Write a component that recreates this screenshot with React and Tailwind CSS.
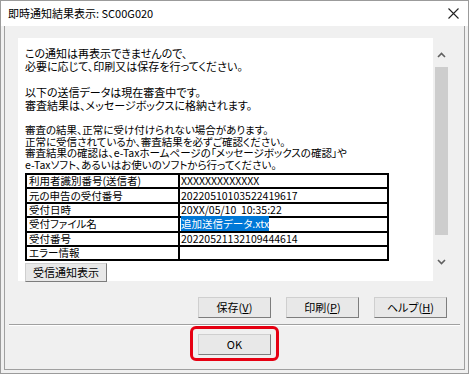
import React from 'react';

function WinButton({ children, className = '' }) {
  return (
    <button
      className={`h-[21px] w-[73px] flex items-center justify-center border border-[#cfcfcf] border-r-[#7d7d7d] border-b-[#7d7d7d] bg-[#e8e8e8] text-[11px] text-black leading-none ${className}`}
    >
      {children}
    </button>
  );
}

function Chevron({ up }) {
  return (
    <svg width="9" height="6" viewBox="0 0 9 6" className="block">
      <path
        d={up ? 'M1 5 L4.5 1.5 L8 5' : 'M1 1 L4.5 4.5 L8 1'}
        fill="none"
        stroke="#606060"
        strokeWidth="1.6"
      />
    </svg>
  );
}

const rows = [
  ['利用者識別番号(送信者)', 'XXXXXXXXXXXXX'],
  ['元の申告の受付番号', '20220510103522419617'],
  ['受付日時', '20XX/05/10  10:35:22'],
  ['受付ファイル名', 'selected'],
  ['受付番号', '20220521132109444614'],
  ['エラー情報', ''],
];

export default function App() {
  return (
    <div className="w-[469px] h-[374px] border border-[#9b9b9b] bg-white flex flex-col overflow-hidden font-['Noto_Sans_CJK_JP',sans-serif] text-black [font-feature-settings:'palt']">
      {/* title bar */}
      <div className="h-[25px] flex items-center justify-between pl-[7px] pr-[9px] shrink-0">
        <span className="text-[11px] leading-none">即時通知結果表示: SC00G020</span>
        <svg width="11" height="11" viewBox="0 0 11 11">
          <path d="M0.5 0.5 L10.5 10.5 M10.5 0.5 L0.5 10.5" stroke="#222" strokeWidth="1.1" />
        </svg>
      </div>

      <div className="flex-1 bg-[#f0f0f0] px-[3px] pb-[3px] flex flex-col">
        <div className="flex-1 border-x border-b border-[#a0a0a0] flex flex-col">
          {/* scrollable panel */}
          <div className="mt-[12px] mx-[13px] h-[243px] flex">
            <div className="w-[415px] bg-white px-[7px] pt-[9px]">
              <p className="text-[11px] leading-[13px]">
                この通知は再表示できませんので、
                <br />
                必要に応じて、印刷又は保存を行ってください。
              </p>
              <p className="text-[11px] leading-[13px] mt-[13px]">
                以下の送信データは現在審査中です。
                <br />
                審査結果は、メッセージボックスに格納されます。
              </p>
              <p className="text-[10.5px] leading-[11.5px] mt-[12px]">
                審査の結果、正常に受け付けられない場合があります。
                <br />
                正常に受信されているか、審査結果を必ずご確認ください。
                <br />
                審査結果の確認は、e-Taxホームページの「メッセージボックスの確認」や
                <br />
                e-Taxソフト、あるいはお使いのソフトから行ってください。
              </p>

              <table className="mt-[3px] border border-black border-separate border-spacing-0 w-[364px] text-[10.5px]">
                <tbody>
                  {rows.map(([label, value]) => (
                    <tr key={label}>
                      <td className="w-[153px] border border-black h-[14.4px] leading-[12px] px-[2px] whitespace-nowrap">
                        {label}
                      </td>
                      <td className="border border-black h-[14.4px] leading-[12px] px-[1px] whitespace-pre">
                        {value === 'selected' ? (
                          <span className="bg-[#0078d7] text-white">追加送信データ.xtx</span>
                        ) : (
                          value
                        )}
                      </td>
                    </tr>
                  ))}
                </tbody>
              </table>

              <button className="mt-[2px] h-[19px] w-[82px] flex items-center justify-center border border-[#cfcfcf] border-r-[#7d7d7d] border-b-[#7d7d7d] bg-[#e8e8e8] text-[11px] leading-none">
                受信通知表示
              </button>
            </div>

            {/* scrollbar */}
            <div className="w-[17px] flex flex-col items-center">
              <div className="h-[26px] flex items-center justify-center pt-[8px]">
                <Chevron up />
              </div>
              <div className="w-[13px] h-[168px] mt-[3px] bg-[#cdcdcd]" />
              <div className="flex-1 flex items-end justify-center pb-[16px]">
                <Chevron />
              </div>
            </div>
          </div>

          {/* action buttons */}
          <div className="mt-[16px] flex justify-end gap-[15px] pr-[17px]">
            <WinButton>
              保存(<span className="underline">V</span>)
            </WinButton>
            <WinButton>
              印刷(<span className="underline">P</span>)
            </WinButton>
            <WinButton>
              ヘルプ(<span className="underline">H</span>)
            </WinButton>
          </div>

          <div className="mt-[6px] mx-[4px] border-t border-t-[#a0a0a0] border-b border-b-white" />

          <div className="flex justify-center">
            <div className="border-[3px] border-[#e60012] rounded-[6px] px-[5px] pt-[5px] pb-[3px]">
              <WinButton>OK</WinButton>
            </div>
          </div>
        </div>
      </div>
    </div>
  );
}
